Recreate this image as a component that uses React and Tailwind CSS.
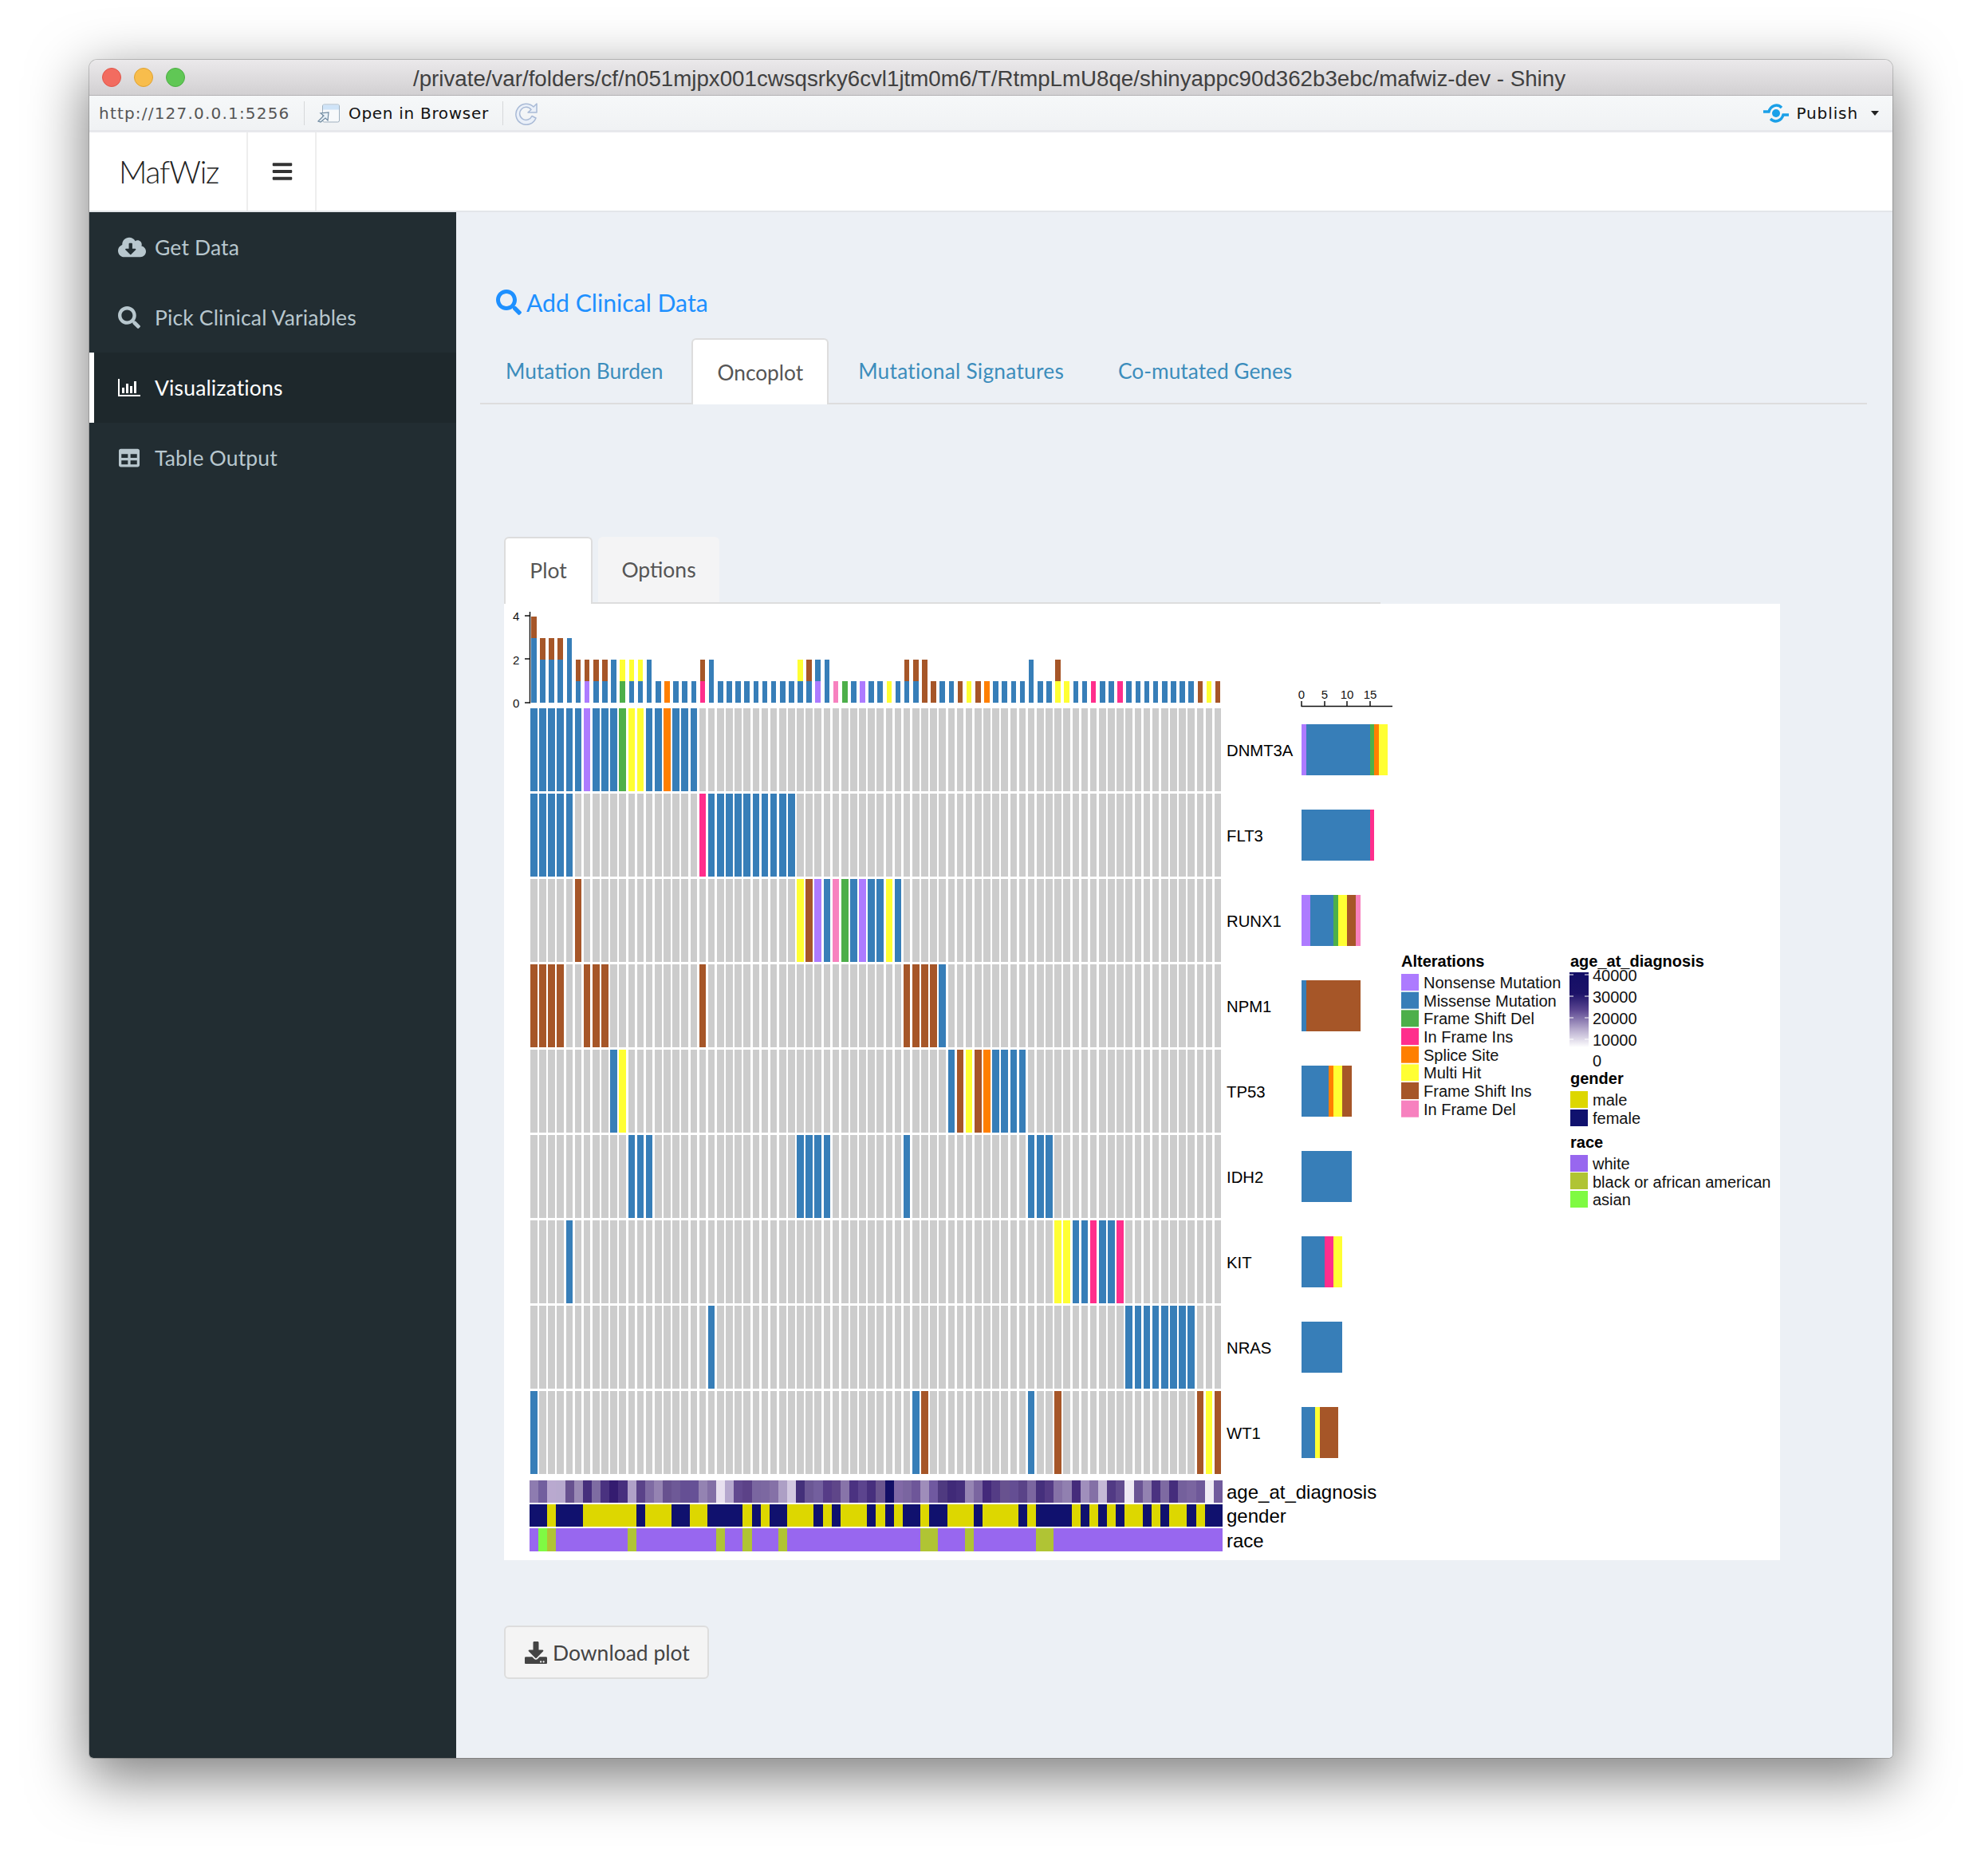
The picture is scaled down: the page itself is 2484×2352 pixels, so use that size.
import React from 'react';
import { FaCloudDownloadAlt, FaSearch, FaTable, FaDownload, FaBars } from 'react-icons/fa';

const COLORS = {
  N: '#ad7bff', M: '#377eb8', F: '#4daf4a', I: '#ff2e8c',
  S: '#ff7f00', H: '#ffff33', B: '#a65628', D: '#f781bf',
};
const ORDER = 'NMFISHBD'.split('');
const LEGEND = [
  ['N', 'Nonsense Mutation', 1239], ['M', 'Missense Mutation', 1262], ['F', 'Frame Shift Del', 1284],
  ['I', 'In Frame Ins', 1307], ['S', 'Splice Site', 1330], ['H', 'Multi Hit', 1352],
  ['B', 'Frame Shift Ins', 1375], ['D', 'In Frame Del', 1398],
];

const parse = (s) => {
  const out = {};
  s.split(' ').forEach((part) => {
    const type = part.slice(-1);
    const [a, b] = part.slice(0, -1).split('-').map(Number);
    for (let i = a; i <= (b ?? a); i++) out[i] = type;
  });
  return out;
};

const GENES = [
  ['DNMT3A', parse('0-5M 6N 7-9M 10F 11-12H 13-14M 15S 16-18M')],
  ['FLT3', parse('0-4M 19I 20-29M')],
  ['RUNX1', parse('5B 30H 31B 32N 33M 34D 35F 36M 37N 38-39M 40H 41M')],
  ['NPM1', parse('0-3B 6-8B 19B 42-45B 46M')],
  ['TP53', parse('9M 10H 47M 48B 49H 50B 51S 52-55M')],
  ['IDH2', parse('11-13M 30-33M 42M 56-58M')],
  ['KIT', parse('4M 59-60H 61-62M 63I 64-65M 66I')],
  ['NRAS', parse('20M 67-74M')],
  ['WT1', parse('0M 43M 44B 56M 59B 75B 76H 77B')],
];

const AGE = [
  '#8e7cb0', '#725f9e', '#b9a9cf', '#b7a9ce', '#67518f', '#9a8ab5', '#462f7c', '#7e6ca2', '#4a3280', '#341c70',
  '#472f7e', '#b0a1c8', '#5a4289', '#7f6ba3', '#9583b2', '#67518f', '#6e5997', '#654f94', '#665196', '#9483b2',
  '#836fa6', '#e8e0ef', '#b6a8ce', '#62498f', '#5c4288', '#7a66a0', '#7c68a1', '#8571a7', '#ad9fc5', '#d2c8e0',
  '#44307a', '#6b5795', '#735f9e', '#563c87', '#5f4689', '#8874a9', '#4b3281', '#5c448e', '#472f7d', '#6b558f',
  '#130e66', '#8169a6', '#7a65a0', '#6e5699', '#9f8dba', '#7059a0', '#4f3a80', '#402a78', '#452f7c', '#9685b3',
  '#7a65a0', '#43297a', '#543c85', '#68528f', '#644e93', '#5a4388', '#7b66a0', '#452f7c', '#543b85', '#8672a7',
  '#9180b0', '#452c7b', '#a08fbc', '#8470a6', '#c4b9d6', '#513a84', '#624c8f', '#eee9f3', '#6a5494', '#9382b1',
  '#4a3280', '#7e6aa2', '#452d7c', '#74609c', '#7a65a0', '#6e5899', '#f0ecf4', '#715b9c',
];
const MALE = '#ddd700';
const FEMALE = '#10116e';
const FEMALE_COLS = parse('0-1X 3-5X 12X 16-17X 20-23X 25X 27-28X 32X 34X 38X 40X 42-43X 45-46X 50X 55X 57-60X 62X 64X 66X 69X 71X 74X 76-77X');
const WHITE = '#9867ef';
const BLACK_AA = '#b0c434';
const ASIAN = '#7ffa43';
const BLACK_COLS = parse('2X 11X 21X 24X 28X 44-45X 49X 57-58X');

const colX = (i) => 664 + i * 11.14;

function Oncoplot() {
  const n = 78;
  const cols = Array.from({ length: n }, (_, i) => i);
  return (
    <svg width="1600" height="1199" viewBox="632 757 1600 1199" className="block bg-white shrink-0" fontFamily="'Liberation Sans', Arial, sans-serif">
      <defs>
        <linearGradient id="ageRamp" x1="0" y1="0" x2="0" y2="1">
          <stop offset="0" stopColor="#130e66" />
          <stop offset="0.28" stopColor="#1c1268" />
          <stop offset="0.5" stopColor="#5a4590" />
          <stop offset="0.75" stopColor="#b3a7cb" />
          <stop offset="1" stopColor="#ffffff" />
        </linearGradient>
      </defs>

      {/* burden bars */}
      <line x1="664.5" y1="767" x2="664.5" y2="881.5" stroke="#111" strokeWidth="1.5" />
      {[[4, 772, 778], [2, 826, 833], [0, 881, 887]].map(([v, y, b]) => (
        <g key={v}>
          <line x1="658" y1={y} x2="665" y2={y} stroke="#111" strokeWidth="1.5" />
          <text x="643" y={b} fontSize="15" fill="#111">{v}</text>
        </g>
      ))}
      <g shapeRendering="crispEdges">
        {cols.map((i) => {
          let y = 881;
          const stack = [];
          ORDER.forEach((t) => {
            GENES.forEach(([, cells]) => {
              if (cells[i] === t) {
                y -= 27;
                stack.push(<rect key={`${t}${y}`} x={colX(i) + 2} y={y} width="6.6" height="27" fill={COLORS[t]} />);
              }
            });
          });
          return <g key={i}>{stack}</g>;
        })}
      </g>

      {/* matrix */}
      <g shapeRendering="crispEdges">
        {GENES.map(([gene, cells], r) => (
          <g key={gene}>
            {cols.map((i) => (
              <rect key={i} x={colX(i) + 1} y={888 + r * 107} width="8.6" height="104" fill={COLORS[cells[i]] || '#cccccc'} />
            ))}
          </g>
        ))}
      </g>
      {GENES.map(([gene], r) => (
        <text key={gene} x="1538" y={948 + r * 107} fontSize="20.3" fill="#000">{gene}</text>
      ))}

      {/* annotations */}
      <g shapeRendering="crispEdges">
        {cols.map((i) => (
          <g key={i}>
            <rect x={colX(i)} y="1856" width="11.3" height="28" fill={AGE[i]} />
            <rect x={colX(i)} y="1886" width="11.3" height="28" fill={FEMALE_COLS[i] ? FEMALE : MALE} />
            <rect x={colX(i)} y="1916" width="11.3" height="29" fill={i === 1 ? ASIAN : BLACK_COLS[i] ? BLACK_AA : WHITE} />
          </g>
        ))}
      </g>
      <text x="1538" y="1879" fontSize="24" fill="#000">age_at_diagnosis</text>
      <text x="1538" y="1909" fontSize="24" fill="#000">gender</text>
      <text x="1538" y="1940" fontSize="24" fill="#000">race</text>

      {/* gene totals */}
      <line x1="1632" y1="885.5" x2="1746" y2="885.5" stroke="#111" strokeWidth="1.5" />
      {[[0, 1632], [5, 1661], [10, 1689], [15, 1718]].map(([v, x]) => (
        <g key={v}>
          <line x1={x} y1="879" x2={x} y2="886" stroke="#111" strokeWidth="1.5" />
          <text x={x} y="876" fontSize="15" textAnchor="middle" fill="#111">{v}</text>
        </g>
      ))}
      <g shapeRendering="crispEdges">
        {GENES.map(([gene, cells], r) => {
          let x = 1632;
          return (
            <g key={gene}>
              {ORDER.map((t) => {
                const count = Object.values(cells).filter((v) => v === t).length;
                if (!count) return null;
                const rect = <rect key={t} x={x} y={908 + r * 107} width={count * 5.7} height="64" fill={COLORS[t]} />;
                x += count * 5.7;
                return rect;
              })}
            </g>
          );
        })}
      </g>

      {/* legends */}
      <text x="1757" y="1212" fontSize="20" fontWeight="700" fill="#000">Alterations</text>
      {LEGEND.map(([t, label, b], idx) => (
        <g key={t}>
          <rect x="1757" y={1221 + idx * 22.67} width="22" height="21" fill={COLORS[t]} />
          <text x="1785" y={b} fontSize="20" fill="#111">{label}</text>
        </g>
      ))}

      <text x="1969" y="1212" fontSize="20" fontWeight="700" fill="#000">age_at_diagnosis</text>
      <rect x="1968" y="1219" width="24" height="94" fill="url(#ageRamp)" />
      {[1222, 1249, 1276, 1303].map((y) => (
        <g key={y} stroke="#fff" strokeWidth="1">
          <line x1="1968" y1={y} x2="1973" y2={y} />
          <line x1="1987" y1={y} x2="1992" y2={y} />
        </g>
      ))}
      {[['40000', 1230], ['30000', 1257], ['20000', 1284], ['10000', 1311], ['0', 1337]].map(([v, b]) => (
        <text key={v} x="1997" y={b} fontSize="20" fill="#111">{v}</text>
      ))}

      <text x="1969" y="1359" fontSize="20" fontWeight="700" fill="#000">gender</text>
      <rect x="1969" y="1368" width="22" height="21" fill={MALE} />
      <rect x="1969" y="1391" width="22" height="21" fill={FEMALE} />
      <text x="1997" y="1386" fontSize="20" fill="#111">male</text>
      <text x="1997" y="1409" fontSize="20" fill="#111">female</text>

      <text x="1969" y="1439" fontSize="20" fontWeight="700" fill="#000">race</text>
      <rect x="1969" y="1448" width="22" height="21" fill={WHITE} />
      <rect x="1969" y="1470" width="22" height="21" fill={BLACK_AA} />
      <rect x="1969" y="1493" width="22" height="21" fill={ASIAN} />
      <text x="1997" y="1466" fontSize="20" fill="#111">white</text>
      <text x="1997" y="1489" fontSize="20" fill="#111">black or african american</text>
      <text x="1997" y="1511" fontSize="20" fill="#111">asian</text>
    </svg>
  );
}

function BarChartIcon() {
  return (
    <svg width="28" height="22" viewBox="0 0 28 22" fill="#fff">
      <rect x="0" y="0" width="2" height="22" />
      <rect x="0" y="20" width="28" height="2" />
      <rect x="5" y="11" width="3" height="7" />
      <rect x="10" y="6" width="3" height="12" />
      <rect x="15" y="9" width="3" height="9" />
      <rect x="20" y="3" width="3" height="15" />
    </svg>
  );
}

function OpenIcon() {
  return (
    <svg width="30" height="24" viewBox="0 0 30 24">
      <rect x="7.5" y="1" width="21" height="22" rx="2" fill="#f7f9fb" stroke="#9fb0bf" />
      <rect x="8" y="1.5" width="20" height="6" fill="#cfe4f8" />
      <path d="M2 22 L9 15 L5 12 L15 11 L14 21 L11 18 L5 23 Z" fill="#e9f1f7" stroke="#6f8aa0" strokeWidth="1.2" />
    </svg>
  );
}

function RefreshIcon() {
  return (
    <svg width="30" height="30" viewBox="0 0 30 30" fill="none">
      <path d="M27 21 A13 13 0 1 1 24 7 L28 3 L28 14 L17 14 L21 10.5 A8 8 0 1 0 22 18.5 Z" fill="#eaf0f9" stroke="#a9bad6" strokeWidth="1.5" strokeLinejoin="round" />
    </svg>
  );
}

function PublishIcon() {
  return (
    <svg width="32" height="24" viewBox="0 0 32 24" fill="none" stroke="#1ba0e8" strokeWidth="3.4">
      <circle cx="16" cy="12" r="5" fill="#1ba0e8" stroke="none" />
      <path d="M0 10 L7 10 C9 3 17 -1 23 5" />
      <path d="M32 14 L25 14 C23 21 15 25 9 19" />
    </svg>
  );
}

const NAV = [
  { label: 'Get Data', icon: <FaCloudDownloadAlt className="w-[35px] h-[28px]" /> },
  { label: 'Pick Clinical Variables', icon: <FaSearch className="w-[28px] h-[28px]" /> },
  { label: 'Visualizations', icon: <BarChartIcon />, active: true },
  { label: 'Table Output', icon: <FaTable className="w-[28px] h-[26px]" /> },
];

export default function App() {
  return (
    <div className="w-[2484px] h-[2352px] bg-white pt-[75px] pl-[112px] font-['Lato',sans-serif]">
      <div className="w-[2261px] h-[2129px] flex flex-col overflow-hidden rounded-t-[10px] rounded-b-[5px] shadow-[0_0_0_1px_rgba(0,0,0,0.18),0_22px_70px_4px_rgba(0,0,0,0.5)]">
        {/* Title bar */}
        <div className="h-[45px] shrink-0 flex items-center pl-[16px] bg-gradient-to-b from-[#ebe9eb] to-[#d2d0d2] border-b border-[#b3b1b3]">
          <span className="w-[24px] h-[24px] rounded-full bg-[#f26c60] border border-[#e0564a]" />
          <span className="w-[24px] h-[24px] rounded-full bg-[#f8bd4c] border border-[#dfa232] ml-[16px]" />
          <span className="w-[24px] h-[24px] rounded-full bg-[#60c755] border border-[#4bae42] ml-[16px]" />
          <span className="ml-[286px] pt-[3px] whitespace-nowrap font-['Liberation_Sans',sans-serif] text-[27.7px] leading-none text-[#404040]">
            /private/var/folders/cf/n051mjpx001cwsqsrky6cvl1jtm0m6/T/RtmpLmU8qe/shinyappc90d362b3ebc/mafwiz-dev - Shiny
          </span>
        </div>

        {/* RStudio toolbar */}
        <div className="h-[46px] shrink-0 flex items-center font-['DejaVu_Sans',sans-serif] text-[20px] bg-gradient-to-b from-[#f6f8f9] to-[#f0f2f4] border-b-[3px] border-[#e7e8ec]">
          <span className="ml-[12px] w-[257px] text-[#555] tracking-[1.2px]">http://127.0.0.1:5256</span>
          <span className="w-px h-[30px] bg-[#d6d8da]" />
          <span className="ml-[15px] flex items-center gap-[10px] text-[#111] tracking-[0.7px]">
            <OpenIcon />
            Open in Browser
          </span>
          <span className="ml-[17px] w-px h-[30px] bg-[#d6d8da]" />
          <span className="ml-[14px] flex"><RefreshIcon /></span>
          <span className="ml-auto flex items-center text-[#111] tracking-[0.9px]">
            <PublishIcon />
            <span className="ml-[9px]">Publish</span>
            <span className="ml-[16px] mr-[17px] w-0 h-0 border-x-[5px] border-x-transparent border-t-[6px] border-t-[#222]" />
          </span>
        </div>

        {/* Navbar */}
        <div className="h-[100px] shrink-0 flex bg-white border-b-2 border-[#e3e6ea]">
          <div className="w-[199px] flex items-center pl-[37px] border-r-2 border-[#eeeeee]">
            <span className="font-light text-[39px] tracking-[-1.2px] text-[#222]">MafWiz</span>
          </div>
          <div className="w-[86px] pl-[2px] flex items-center justify-center border-r-2 border-[#eeeeee]">
            <FaBars className="w-[26px] h-[28px] text-[#333]" />
          </div>
        </div>

        <div className="flex flex-1 min-h-0">
          {/* Sidebar */}
          <aside className="w-[460px] shrink-0 bg-[#222d32]">
            {NAV.map((item) => (
              <div
                key={item.label}
                className={
                  item.active
                    ? 'h-[88px] flex items-center pl-[30px] border-l-[6px] border-white bg-[#1e282c] text-white text-[26.5px] tracking-[0.15px]'
                    : 'h-[88px] flex items-center pl-[36px] text-[#b8c7ce] text-[26.5px] tracking-[0.15px]'
                }
              >
                <span className="w-[46px] flex items-center">{item.icon}</span>
                <span className="pt-[2px]">{item.label}</span>
              </div>
            ))}
          </aside>

          {/* Content */}
          <main className="flex-1 min-w-0 bg-[#ecf0f5] pl-[30px] pr-[32px]">
            <div className="mt-[94px] ml-[20px] h-[38px] flex items-center gap-[6px] text-[#1e90ff] text-[30.2px]">
              <FaSearch className="w-[32px] h-[32px]" />
              <span className="pt-[1px]">Add Clinical Data</span>
            </div>

            <div className="mt-[26px] h-[83px] flex border-b-2 border-[#dddddd] text-[26.3px] text-[#3c8dbc]">
              <div className="px-[32px] mr-[4px] pt-[3px] flex items-center">Mutation Burden</div>
              <div className="px-[30px] mr-[6px] pt-[3px] h-[83px] flex items-center bg-white text-[#555] border-2 border-b-0 border-[#dddddd] rounded-t-md">Oncoplot</div>
              <div className="px-[31px] mr-[6px] pt-[3px] flex items-center tracking-[0.25px]">Mutational Signatures</div>
              <div className="px-[31px] pt-[3px] flex items-center">Co-mutated Genes</div>
            </div>

            <div className="ml-[30px] mt-[166px]">
              <div className="w-[1099px] h-[84px] flex border-b-2 border-[#dddddd] text-[26.5px] text-[#555]">
                <div className="w-[111px] h-[84px] flex items-center justify-center bg-white border-2 border-b-0 border-[#dddddd] rounded-t-md">Plot</div>
                <div className="w-[152px] ml-[7px] pt-[2px] flex items-center justify-center bg-[#f4f4f5] rounded-t-md">Options</div>
              </div>
              <Oncoplot />
              <button className="mt-[82px] w-[257px] h-[67px] flex items-center pl-[24px] gap-[7px] bg-[#f4f4f4] border-2 border-[#dddddd] rounded-md text-[26.5px] text-[#444]">
                <FaDownload className="w-[28px] h-[28px]" />
                <span className="pt-[2px]">Download plot</span>
              </button>
            </div>
          </main>
        </div>
      </div>
    </div>
  );
}
